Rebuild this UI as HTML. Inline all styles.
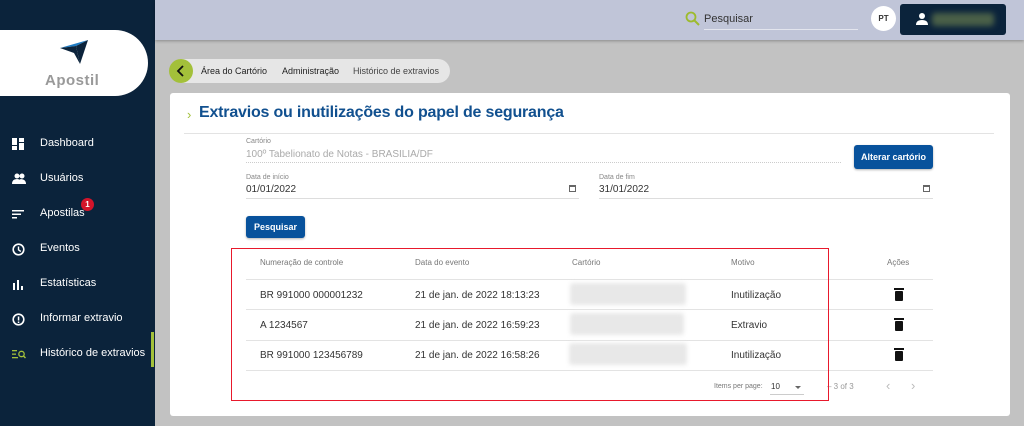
<!DOCTYPE html>
<html><head><meta charset="utf-8"><style>
*{box-sizing:border-box;margin:0;padding:0}
body{width:1024px;height:426px;overflow:hidden;background:#c2c2c2;font-family:"Liberation Sans",Arial,sans-serif;position:relative}
.abs{position:absolute}
.side{left:0;top:0;width:155px;height:426px;background:#0b233b}
.logo{left:0;top:30px;width:148px;height:66px;background:#fff;border-radius:0 33px 33px 0}
.nav{left:0;width:155px;height:20px;color:#fff;font-size:11px}
.nav span{position:absolute;left:40px;top:4px}
.nav svg{position:absolute;left:12px;top:5px}
.top{left:155px;top:0;width:869px;height:40px;background:#c0c5d8;box-shadow:0 1px 3px rgba(0,0,0,.3)}
.card{left:170px;top:93px;width:840px;height:323px;background:#fff;border-radius:3px}
.lbl{font-size:7px;color:#888}
.val{font-size:10px;color:#333}
.th{font-size:8px;color:#777}
.td{font-size:10px;color:#333}
.line{height:1px;background:#e3e3e3}
.blur{background:#e8e8e8;filter:blur(2px);border-radius:3px}
.btn{background:#08529c;color:#fff;font-weight:bold;font-size:9px;text-align:center;border-radius:3px;box-shadow:0 1px 2px rgba(0,0,0,.3)}
.trash{width:8px;height:10px;background:#111;border-radius:1px}
.trash:before{content:"";position:absolute;left:-1px;top:-3px;width:10px;height:2px;background:#111}
</style></head><body>
<div class="abs side"></div>
<div class="abs logo">
 <svg class="abs" style="left:58px;top:8px" width="32" height="28" viewBox="0 0 32 28"><polygon points="2,10 30,2 18,8" fill="#1e7cc4"/><polygon points="2,10 18,8 22,26 16,15" fill="#0b233b"/><polygon points="18,8 30,2 22,26" fill="#0b233b"/></svg>
 <div class="abs" style="left:45px;top:42px;font-size:15px;font-weight:bold;color:#999;letter-spacing:.5px">Apostil</div>
</div>
<div class="abs nav" style="top:133px"><svg width="12" height="12"><rect x="0" y="0" width="5" height="7" fill="#fff"/><rect x="7" y="0" width="5" height="4" fill="#fff"/><rect x="0" y="8" width="5" height="4" fill="#fff"/><rect x="7" y="5" width="5" height="7" fill="#fff"/></svg><span>Dashboard</span></div>
<div class="abs nav" style="top:168px"><svg width="14" height="12"><circle cx="5" cy="3" r="2.5" fill="#fff"/><circle cx="10" cy="3" r="2.5" fill="#fff"/><path d="M0 11 Q0 6 5 6 Q10 6 10 11Z M8 6 Q14 6 14 11 L10 11Z" fill="#fff"/></svg><span>Usuários</span></div>
<div class="abs nav" style="top:203px"><svg width="12" height="12"><rect y="2" width="12" height="1.5" fill="#fff"/><rect y="5.5" width="9" height="1.5" fill="#fff"/><rect y="9" width="5" height="1.5" fill="#fff"/></svg><span>Apostilas</span>
 <div class="abs" style="left:81px;top:-5px;width:13px;height:13px;border-radius:50%;background:#d3142a;font-size:8px;font-weight:bold;text-align:center;line-height:13px">1</div></div>
<div class="abs nav" style="top:238px"><svg width="13" height="13"><circle cx="6.5" cy="6.5" r="5.3" fill="none" stroke="#fff" stroke-width="1.6"/><path d="M6.5 3.5V6.8L8.8 8.5" stroke="#fff" stroke-width="1.4" fill="none"/></svg><span>Eventos</span></div>
<div class="abs nav" style="top:273px"><svg width="12" height="12"><rect x="1" y="5" width="2" height="7" fill="#fff"/><rect x="5" y="2" width="2" height="10" fill="#fff"/><rect x="9" y="8" width="2" height="4" fill="#fff"/></svg><span>Estatísticas</span></div>
<div class="abs nav" style="top:308px"><svg width="13" height="13"><circle cx="6.5" cy="6.5" r="5.3" fill="none" stroke="#fff" stroke-width="1.6"/><rect x="5.8" y="3.5" width="1.5" height="4" fill="#fff"/><rect x="5.8" y="8.5" width="1.5" height="1.5" fill="#fff"/></svg><span>Informar extravio</span></div>
<div class="abs nav" style="top:343px"><svg width="14" height="12"><rect y="2" width="5" height="1.3" fill="#a3c03a"/><rect y="5.5" width="4" height="1.3" fill="#a3c03a"/><rect y="9" width="6" height="1.3" fill="#a3c03a"/><circle cx="9.5" cy="6" r="2.7" fill="none" stroke="#a3c03a" stroke-width="1.3"/><path d="M11.5 8L13.5 10" stroke="#a3c03a" stroke-width="1.4"/></svg><span>Histórico de extravios</span></div>
<div class="abs" style="left:151px;top:332px;width:3px;height:35px;background:#a3c03a"></div>

<div class="abs top">
 <svg class="abs" style="left:530px;top:11px" width="16" height="16"><circle cx="6" cy="6" r="4.5" fill="none" stroke="#9dbb2d" stroke-width="1.8"/><path d="M9.5 9.5L14 14" stroke="#9dbb2d" stroke-width="2"/></svg>
 <div class="abs" style="left:549px;top:13px;font-size:11px;color:#333">Pesquisar</div>
 <div class="abs" style="left:549px;top:29px;width:154px;height:1px;background:#e3e5ee"></div>
 <div class="abs" style="left:716px;top:6px;width:25px;height:25px;border-radius:50%;background:#fff;font-size:8px;font-weight:bold;text-align:center;line-height:25px;color:#333">PT</div>
 <div class="abs" style="left:745px;top:4px;width:106px;height:31px;background:#0b233b;border-radius:3px">
  <svg class="abs" style="left:16px;top:9px" width="12" height="12"><circle cx="6" cy="3" r="3" fill="#fff"/><path d="M0 12Q0 7 6 7Q12 7 12 12Z" fill="#fff"/></svg>
  <div class="abs blur" style="left:32px;top:9px;width:62px;height:13px;background:#4a6048;filter:blur(3px)"></div>
 </div>
</div>

<div class="abs" style="left:170px;top:59px;width:280px;height:24px;background:#e6e6e6;border-radius:12px"></div>
<div class="abs" style="left:169px;top:59px;width:24px;height:24px;background:#a3c03a;border-radius:50%"><svg class="abs" style="left:7px;top:6px" width="10" height="12"><path d="M7 1L2 6L7 11" stroke="#111" stroke-width="1.8" fill="none"/></svg></div>
<div class="abs" style="left:201px;top:66px;font-size:9px;color:#222">Área do Cartório</div>
<div class="abs" style="left:282px;top:66px;font-size:9px;color:#222">Administração</div>
<div class="abs" style="left:353px;top:66px;font-size:9px;color:#444">Histórico de extravios</div>

<div class="abs card"></div>
<div class="abs" style="left:187px;top:107px;font-size:13px;color:#a3c03a">›</div>
<div class="abs" style="left:199px;top:104px;font-size:16px;font-weight:bold;color:#11508f;letter-spacing:-.2px">Extravios ou inutilizações do papel de segurança</div>
<div class="abs line" style="left:184px;top:133px;width:810px"></div>

<div class="abs lbl" style="left:246px;top:138px">Cartório</div>
<div class="abs val" style="left:246px;top:149px;color:#aaa">100º Tabelionato de Notas  - BRASILIA/DF</div>
<div class="abs" style="left:246px;top:162px;width:595px;border-top:1px dotted #ccc"></div>
<div class="abs btn" style="left:854px;top:145px;width:79px;height:24px;line-height:24px">Alterar cartório</div>

<div class="abs lbl" style="left:246px;top:174px">Data de início</div>
<div class="abs val" style="left:246px;top:184px">01/01/2022</div>
<div class="abs line" style="left:246px;top:198px;width:333px;background:#ddd"></div>
<div class="abs" style="left:569px;top:185px;width:7px;height:7px;border:1px solid #666;border-top-width:2px"></div>
<div class="abs lbl" style="left:599px;top:174px">Data de fim</div>
<div class="abs val" style="left:599px;top:184px">31/01/2022</div>
<div class="abs line" style="left:599px;top:198px;width:334px;background:#ddd"></div>
<div class="abs" style="left:923px;top:185px;width:7px;height:7px;border:1px solid #666;border-top-width:2px"></div>

<div class="abs btn" style="left:246px;top:216px;width:59px;height:22px;line-height:22px">Pesquisar</div>

<div class="abs th" style="left:260px;top:258px">Numeração de controle</div>
<div class="abs th" style="left:415px;top:258px">Data do evento</div>
<div class="abs th" style="left:572px;top:258px">Cartório</div>
<div class="abs th" style="left:731px;top:258px">Motivo</div>
<div class="abs th" style="left:887px;top:258px">Ações</div>
<div class="abs line" style="left:246px;top:279px;width:687px"></div>
<div class="abs line" style="left:246px;top:309px;width:687px"></div>
<div class="abs line" style="left:246px;top:340px;width:687px"></div>
<div class="abs line" style="left:246px;top:370px;width:687px"></div>

<div class="abs td" style="left:260px;top:290px">BR 991000 000001232</div>
<div class="abs td" style="left:415px;top:290px">21 de jan. de 2022 18:13:23</div>
<div class="abs blur" style="left:570px;top:283px;width:116px;height:22px"></div>
<div class="abs td" style="left:731px;top:290px">Inutilização</div>
<div class="abs trash" style="left:895px;top:291px"></div>

<div class="abs td" style="left:260px;top:320px">A 1234567</div>
<div class="abs td" style="left:415px;top:320px">21 de jan. de 2022 16:59:23</div>
<div class="abs blur" style="left:570px;top:313px;width:114px;height:22px"></div>
<div class="abs td" style="left:731px;top:320px">Extravio</div>
<div class="abs trash" style="left:895px;top:321px"></div>

<div class="abs td" style="left:260px;top:350px">BR 991000 123456789</div>
<div class="abs td" style="left:415px;top:350px">21 de jan. de 2022 16:58:26</div>
<div class="abs blur" style="left:569px;top:343px;width:118px;height:22px"></div>
<div class="abs td" style="left:731px;top:350px">Inutilização</div>
<div class="abs trash" style="left:895px;top:351px"></div>

<div class="abs" style="left:714px;top:383px;font-size:7px;color:#777">Items per page:</div>
<div class="abs" style="left:771px;top:382px;font-size:8px;color:#333">10</div>
<div class="abs" style="left:795px;top:386px;width:0;height:0;border-left:3px solid transparent;border-right:3px solid transparent;border-top:3px solid #666"></div>
<div class="abs line" style="left:770px;top:394px;width:34px;background:#ccc"></div>
<div class="abs" style="left:827px;top:382px;font-size:8px;color:#999">– 3 of 3</div>
<div class="abs" style="left:886px;top:378px;font-size:13px;color:#bbb">‹</div>
<div class="abs" style="left:911px;top:378px;font-size:13px;color:#bbb">›</div>

<div class="abs" style="left:231px;top:248px;width:598px;height:153px;border:1.5px solid #e8192c"></div>
</body></html>
